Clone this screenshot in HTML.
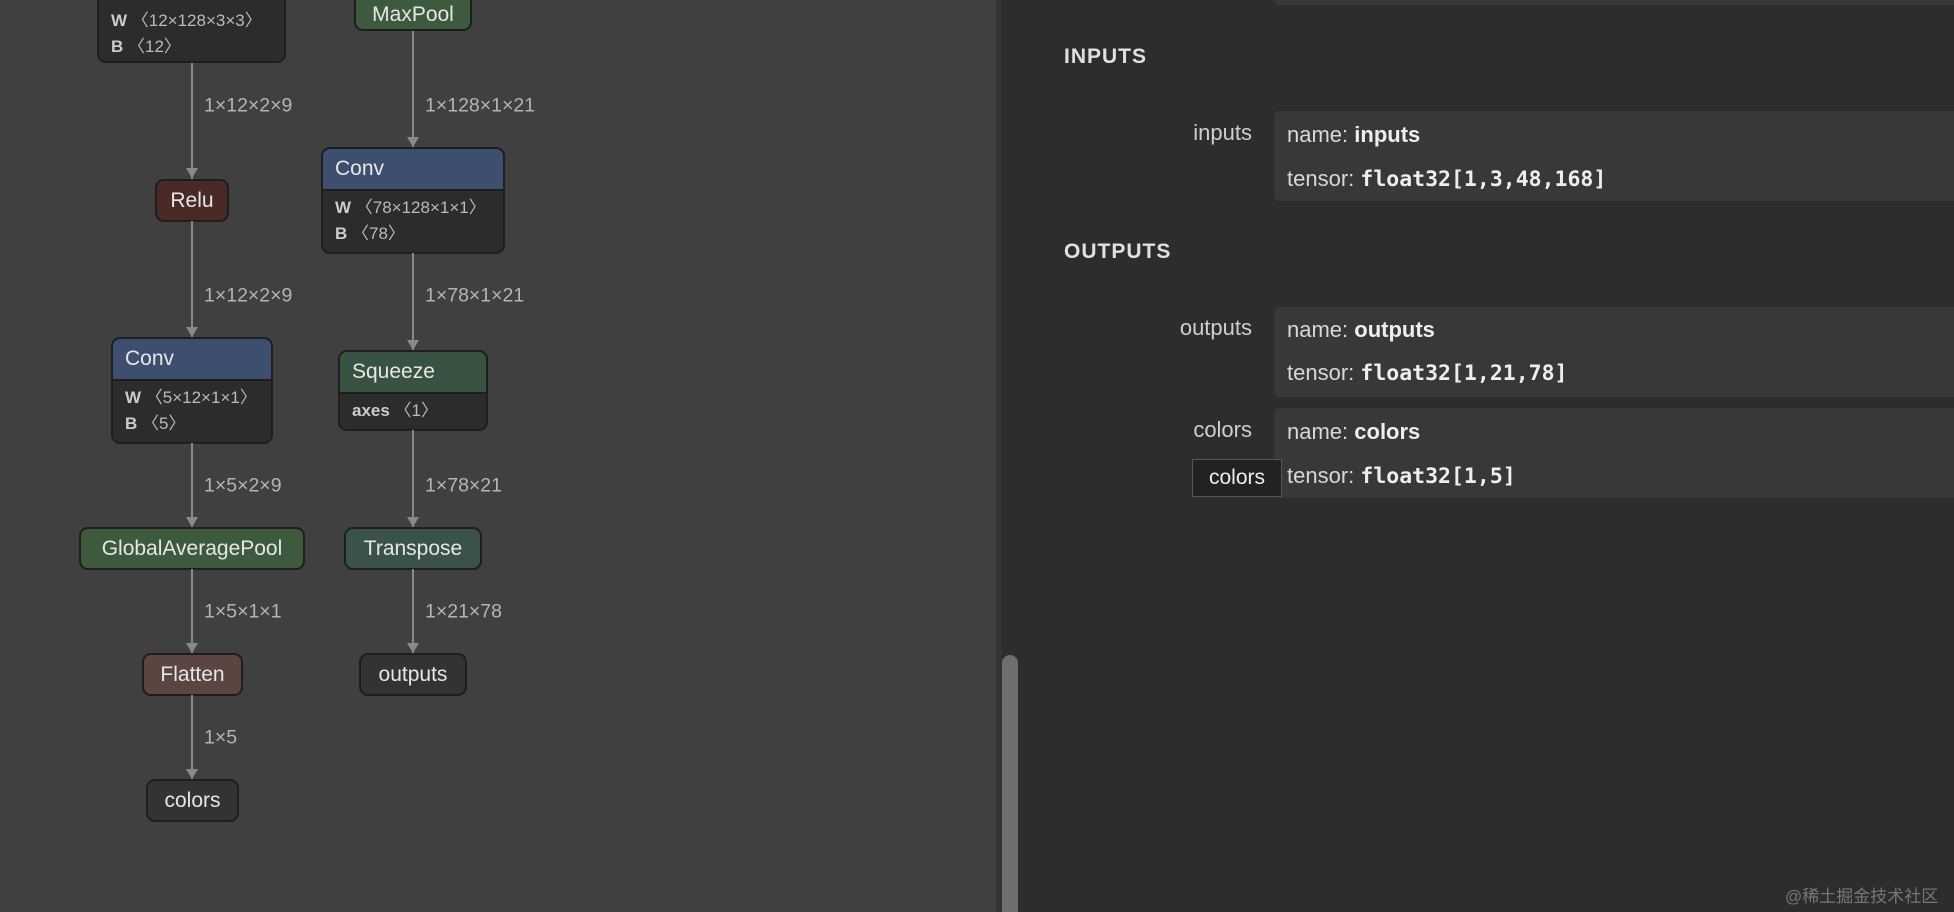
<!DOCTYPE html>
<html><head><meta charset="utf-8"><style>
*{margin:0;padding:0;box-sizing:border-box}
html,body{overflow:hidden}
body{width:1954px;height:912px;background:#2d2d2d;font-family:"Liberation Sans","DejaVu Sans",sans-serif;position:relative}
#left{position:absolute;left:0;top:0;width:996px;height:912px;background:#404040;overflow:hidden}
.n{position:absolute;border:2px solid #1e1e1e;border-radius:9px;overflow:hidden;color:#e6e6e6;font-size:21px}
.n .h{height:100%;display:flex;align-items:center;justify-content:center}
.n .hd{display:flex;align-items:center;padding-left:12px;border-bottom:2px solid #1e1e1e}
.n .bd{background:#2c2c2c;padding:6px 12px;font-size:17px;color:#bbb;line-height:26px}
.n .bd b{color:#ccc}
.lbl{position:absolute;color:#b4b4b4;font-size:19.5px;transform:translateY(-50%)}
.ln{position:absolute;width:2px;background:#8a8a8a}
.ar{position:absolute;width:0;height:0;border-left:6px solid transparent;border-right:6px solid transparent;border-top:10px solid #8a8a8a}
#sb{position:absolute;left:1002px;top:655px;width:16px;height:257px;border-radius:8px 8px 0 0;background:#6e6e6e}
#sep{position:absolute;left:996px;top:0;width:6px;height:912px;background:#333}
.sec{position:absolute;left:1064px;color:#e0e0e0;font-weight:bold;font-size:21px;letter-spacing:1px;transform:translateY(-50%)}
.box{position:absolute;left:1274px;width:680px;background:#383838;border-radius:5px 0 0 5px}
.row{position:absolute;left:1287px;color:#d8d8d8;font-size:22px;transform:translateY(-50%)}
.row b{color:#eee}
.mono{font-family:"DejaVu Sans Mono","Liberation Mono",monospace;font-weight:bold;font-size:21.5px;color:#eee}
.nm{position:absolute;right:702px;color:#cfcfcf;font-size:22px;transform:translateY(-50%)}
</style></head><body>
<div id="left">
<div class="n" style="left:97px;top:-40px;width:189px;height:103px"><div class="bd" style="height:100%;padding-top:46px"><b>W</b> 〈12×128×3×3〉<br><b>B</b> 〈12〉</div></div>
<div class="n" style="left:354px;top:-12px;width:118px;height:43px;background:#3e5a3e"><div class="h" style="padding-top:10px">MaxPool</div></div>

<div class="ln" style="left:191px;top:63px;height:116px"></div><div class="ar" style="left:186px;top:168px"></div>
<div class="lbl" style="left:204px;top:106px">1×12×2×9</div>
<div class="ln" style="left:412px;top:31px;height:116px"></div><div class="ar" style="left:407px;top:137px"></div>
<div class="lbl" style="left:425px;top:106px">1×128×1×21</div>

<div class="n" style="left:155px;top:179px;width:74px;height:43px;background:#4a2a25"><div class="h">Relu</div></div>

<div class="n" style="left:321px;top:147px;width:184px;height:107px;background:#2c2c2c"><div class="hd" style="height:42px;background:#3d4e6e">Conv</div><div class="bd" style="padding-top:4px"><b>W</b> 〈78×128×1×1〉<br><b>B</b> 〈78〉</div></div>

<div class="ln" style="left:191px;top:221px;height:116px"></div><div class="ar" style="left:186px;top:327px"></div>
<div class="lbl" style="left:204px;top:296px">1×12×2×9</div>
<div class="ln" style="left:412px;top:253px;height:97px"></div><div class="ar" style="left:407px;top:340px"></div>
<div class="lbl" style="left:425px;top:296px">1×78×1×21</div>

<div class="n" style="left:111px;top:337px;width:162px;height:107px;background:#2c2c2c"><div class="hd" style="height:42px;background:#3d4e6e">Conv</div><div class="bd" style="padding-top:4px"><b>W</b> 〈5×12×1×1〉<br><b>B</b> 〈5〉</div></div>

<div class="n" style="left:338px;top:350px;width:150px;height:81px;background:#2c2c2c"><div class="hd" style="height:42px;background:#3a5242">Squeeze</div><div class="bd" style="padding-top:4px"><b>axes</b> 〈1〉</div></div>

<div class="ln" style="left:191px;top:443px;height:84px"></div><div class="ar" style="left:186px;top:517px"></div>
<div class="lbl" style="left:204px;top:486px">1×5×2×9</div>
<div class="ln" style="left:412px;top:430px;height:97px"></div><div class="ar" style="left:407px;top:517px"></div>
<div class="lbl" style="left:425px;top:486px">1×78×21</div>

<div class="n" style="left:79px;top:527px;width:226px;height:43px;background:#3e5a3e"><div class="h">GlobalAveragePool</div></div>
<div class="n" style="left:344px;top:527px;width:138px;height:43px;background:#3a5247"><div class="h">Transpose</div></div>

<div class="ln" style="left:191px;top:569px;height:84px"></div><div class="ar" style="left:186px;top:643px"></div>
<div class="lbl" style="left:204px;top:612px">1×5×1×1</div>
<div class="ln" style="left:412px;top:569px;height:84px"></div><div class="ar" style="left:407px;top:643px"></div>
<div class="lbl" style="left:425px;top:612px">1×21×78</div>

<div class="n" style="left:142px;top:653px;width:101px;height:43px;background:#5a4540"><div class="h">Flatten</div></div>
<div class="n" style="left:359px;top:653px;width:108px;height:43px;background:#333"><div class="h">outputs</div></div>

<div class="ln" style="left:191px;top:695px;height:84px"></div><div class="ar" style="left:186px;top:769px"></div>
<div class="lbl" style="left:204px;top:738px">1×5</div>

<div class="n" style="left:146px;top:779px;width:93px;height:43px;background:#333"><div class="h">colors</div></div>
</div>
<div id="sep"></div>
<div id="sb"></div>

<div class="box" style="top:-20px;height:25px"></div>
<div class="sec" style="top:57px">INPUTS</div>
<div class="box" style="top:111px;height:90px"></div>
<div class="nm" style="top:133px">inputs</div>
<div class="row" style="top:135px">name: <b>inputs</b></div>
<div class="row" style="top:179px">tensor: <span class="mono">float32[1,3,48,168]</span></div>

<div class="sec" style="top:252px">OUTPUTS</div>
<div class="box" style="top:307px;height:90px"></div>
<div class="nm" style="top:328px">outputs</div>
<div class="row" style="top:330px">name: <b>outputs</b></div>
<div class="row" style="top:373px">tensor: <span class="mono">float32[1,21,78]</span></div>

<div class="box" style="top:408px;height:90px"></div>
<div class="nm" style="top:430px">colors</div>
<div class="row" style="top:432px">name: <b>colors</b></div>
<div class="row" style="top:476px">tensor: <span class="mono">float32[1,5]</span></div>
<div style="position:absolute;left:1192px;top:459px;width:90px;height:38px;background:#222;border:1px solid #555;color:#eee;font-size:21px;display:flex;align-items:center;justify-content:center">colors</div>

<div style="position:absolute;left:1785px;top:882px;color:#777;font-size:17px;font-family:'Liberation Sans','Noto Sans CJK SC',sans-serif">@稀土掘金技术社区</div>
</body></html>
